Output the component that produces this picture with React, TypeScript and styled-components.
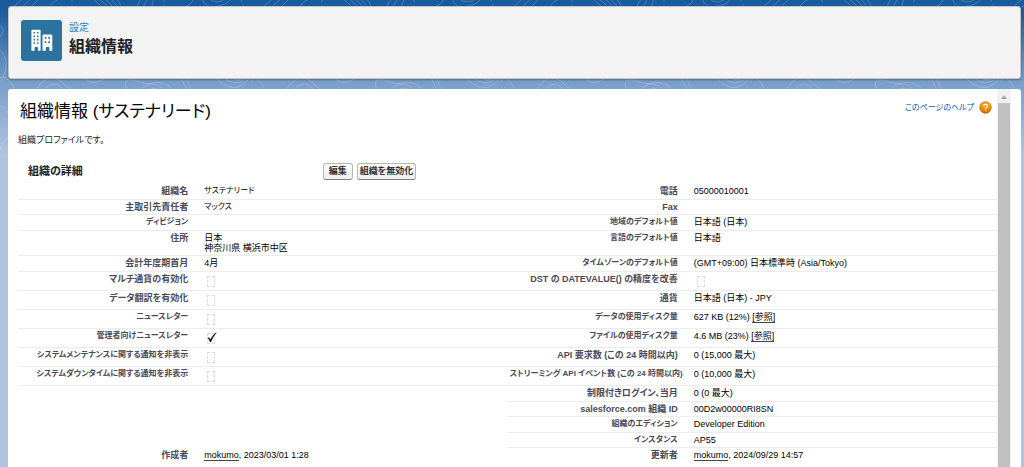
import React from "react";
import styled, { createGlobalStyle } from "styled-components";

const GlobalStyle = createGlobalStyle`
  *, *::before, *::after { box-sizing: border-box; }
  body {
    margin: 0;
    background: #b0c4df;
    color: #000;
    font-family: "Liberation Sans", "Noto Sans CJK JP", sans-serif;
    font-feature-settings: "palt";
    font-size: 9px;
    line-height: 10px;
  }
  h1, h2, h3, p { margin: 0; }
`;

const Page = styled.div`
  position: relative;
  min-height: 100vh;
  display: flex;
  flex-direction: column;
  gap: 10px;
  padding: 6px 3px 0 8px;
  overflow: hidden;
`;

const Backdrop = styled.div`
  position: absolute;
  inset: 0 0 auto 0;
  height: 160px;
  background: linear-gradient(#195c9d 0, #195c9d 10px, #7a9fca 84px, #b0c4df 156px);

  svg { display: block; width: 100%; height: 100%; }
`;

const PageHeader = styled.header`
  position: relative;
  display: flex;
  gap: 7px;
  min-height: 73px;
  padding: 13px 12px;
  border: 1px solid #c4c4c8;
  border-radius: 3px;
  background: #f3f3f3;
  box-shadow: 0 1px 2px rgba(0, 0, 0, 0.3);
`;

const IconTile = styled.span`
  display: block;
  width: 41px;
  height: 41px;
  border-radius: 3px;
  background: #2a739e;

  svg { display: block; width: 100%; height: 100%; }
`;

const HeaderText = styled.div`
  padding-top: 1px;
`;

const Eyebrow = styled.p`
  font-size: 10px;
  line-height: 14px;
  color: #1f7fc0;
`;

const HeaderTitle = styled.h1`
  font-size: 16px;
  line-height: 24px;
  font-weight: 700;
  color: #222;
`;

const Panel = styled.main`
  position: relative;
  flex: 1;
  display: flex;
  padding-right: 10px;
  border-radius: 3px 3px 0 0;
  background: #fff;
`;

const Content = styled.div`
  flex: 1;
  min-width: 0;
  padding: 10px 0 0 10px;
`;

const TitleBar = styled.div`
  display: flex;
  justify-content: space-between;
  align-items: flex-start;
  padding: 0 5px 0 2px;
`;

const Title = styled.h2`
  font-size: 17px;
  line-height: 26px;
  font-weight: 400;
`;

const HelpLink = styled.a`
  display: flex;
  align-items: center;
  gap: 5px;
  padding-top: 2px;
  font-size: 8px;
  color: #015ba7;
  text-decoration: none;

  svg { display: block; width: 13px; height: 13px; }
`;

const Intro = styled.p`
  padding: 9px 0 16px;
  line-height: 12px;
  color: #222;
`;

const SectionBar = styled.div`
  display: flex;
  align-items: center;
  gap: 4px;
  height: 18px;
  margin-bottom: 4px;
  padding-left: 10px;
`;

const SectionTitle = styled.h3`
  width: 30%;
  font-size: 11px;
  line-height: 16px;
  font-weight: 700;
  color: #222;
`;

const Actions = styled.div`
  display: flex;
  gap: 4px;
`;

const ActionButton = styled.button<{ $wide?: boolean }>`
  height: 17px;
  padding: 0 ${(p) => (p.$wide ? 2 : 5)}px;
  border: 1px solid #b5b5b5;
  border-bottom-color: #7f7f7f;
  border-radius: 3px;
  background: linear-gradient(#fff, #efefef);
  font: inherit;
  font-weight: 700;
  font-feature-settings: "palt";
  color: #333;
`;

const DetailTable = styled.table`
  width: 100%;
  table-layout: fixed;
  border-collapse: separate;
  border-spacing: 0;
`;

const Row = styled.tr<{ $height: number }>`
  height: ${(p) => p.$height}px;
`;

const line = "1px solid #ececec";

const Label = styled.th<{ $plain?: boolean; $small?: boolean }>`
  width: 18%;
  padding: 2px 6px 0 2px;
  border-bottom: ${(p) => (p.$plain ? "0" : line)};
  text-align: right;
  vertical-align: top;
  white-space: nowrap;
  font-size: ${(p) => (p.$small ? 8 : 9)}px;
  font-weight: 700;
  color: #4a4a56;
`;

const Value = styled.td<{ $plain?: boolean; $small?: boolean }>`
  width: 32%;
  padding: 2px 0 0 10px;
  border-bottom: ${(p) => (p.$plain ? "0" : line)};
  vertical-align: top;
  white-space: nowrap;
  font-size: ${(p) => (p.$small ? 8 : 9)}px;
`;

const TextLink = styled.a`
  color: #000;
  text-decoration: none;
  border-bottom: 1px solid #444;
`;

const CheckHolder = styled.span`
  position: relative;
  display: block;
  width: 14px;
  height: 14px;
  padding: 2px 3px 0;

  svg {
    position: absolute;
    inset: 0;
    width: 14px;
    height: 14px;
  }
`;

const CheckBox = styled.input`
  appearance: none;
  display: block;
  width: 8px;
  height: 11px;
  margin: 0;
  border: 1px dashed #dcdcdc;
`;

const ScrollTrack = styled.div`
  display: flex;
  flex-direction: column;
  width: 14px;
  padding: 0 1px;
  background: #f1f1f1;

  svg { display: block; width: 12px; height: 14px; }
`;

const ScrollThumb = styled.div`
  flex: 1;
  background: #c1c1c1;
`;

function Contours() {
  return (
    <svg aria-hidden="true">
      <defs>
        <pattern id="contours" width="250" height="160" patternUnits="userSpaceOnUse">
          <g fill="none" stroke="#fff" strokeOpacity="0.2" strokeWidth="1">
            <path d="M12 8 L28 -6 M20 9 L36 -6 M30 8 L44 -6 M50 6 q6 -8 16 -8" />
            <path d="M92 -2 q8 6 14 14 M98 -2 q8 6 14 14 M104 -2 q8 6 12 14 M110 -2 q6 6 10 14 M116 -2 q4 4 6 12 M142 -2 q-4 4 -6 12 M148 -2 q-4 6 -6 12 M154 -2 q-2 6 -3 12" />
            <path d="M180 8 q12 -2 14 -10 M202 -2 q3 12 16 8 q12 -2 14 -10 M208 -2 q10 8 18 0" />
            <path strokeDasharray="4 3" d="M72 -2 v12 M164 -2 v12 M240 -2 l5 12" />
            <path d="M-8 88 q10 -22 22 0 M36 90 q14 -22 30 -4 q6 4 8 6 M44 90 q10 -12 20 0 M84 76 q6 12 22 2" />
            <path d="M128 92 q-8 -14 6 -12 q14 6 22 2 q18 2 16 12 M138 92 q14 -16 28 0 M146 92 q8 -8 14 0" />
            <path d="M180 76 l8 16 M186 76 l6 16 M214 76 q20 22 36 2 M222 76 q14 14 26 0 M230 76 q8 8 14 0" />
            <path d="M-3 22 q12 8 0 18 M-3 48 q16 10 4 34 M-3 104 q12 4 12 14 M0 150 q4 -12 10 -14 M252 18 q-10 8 -6 22 M252 50 q-14 10 -8 22 M252 110 q-14 8 -8 26" />
          </g>
        </pattern>
      </defs>
      <rect width="100%" height="100%" fill="url(#contours)" />
    </svg>
  );
}

function BuildingsIcon() {
  return (
    <svg viewBox="0 0 41 41" aria-hidden="true">
      <path
        fill="#fff"
        fillRule="evenodd"
        d="M11.300 9.800h7.400a.9.9 0 0 1 .9.9V30.200a.6.6 0 0 1-.6.6h-2V27.600a.7.7 0 0 0-.7-.7h-2a.7.7 0 0 0-.7.7V30.800h-2.600a.6.6 0 0 1-.6-.6V10.700a.9.9 0 0 1 .9-.9zM12.500 12v1.600h1.600v-1.600zm3.400 0v1.600h1.600v-1.600zM12.500 15.400v1.600h1.600v-1.600zm3.400 0v1.600h1.600v-1.600zM12.500 18.800v1.600h1.600v-1.600zm3.400 0v1.600h1.600v-1.600zM12.500 22.200v1.600h1.600v-1.600zm3.400 0v1.600h1.600v-1.600z"
      />
      <path
        fill="#fff"
        fillRule="evenodd"
        d="M22.400 14.600h8a.9.9 0 0 1 .9.9V30.200a.6.6 0 0 1-.6.6h-2.300V27.600a.7.7 0 0 0-.7-.7h-2.200a.7.7 0 0 0-.7.7V30.800h-2.700a.6.6 0 0 1-.6-.6V15.500a.9.9 0 0 1 .9-.9zM23.700 17v1.700h1.700v-1.700zm3.600 0v1.700h1.700v-1.700zM23.700 21.200v1.700h1.700v-1.700zm3.600 0v1.700h1.700v-1.700z"
      />
    </svg>
  );
}

function HelpIcon() {
  return (
    <svg viewBox="0 0 13 13" aria-hidden="true">
      <defs>
        <linearGradient id="amber" x1="0" y1="0" x2="0" y2="1">
          <stop offset="0" stopColor="#f3a53a" />
          <stop offset="0.6" stopColor="#ee8f00" />
          <stop offset="1" stopColor="#b56a0c" />
        </linearGradient>
      </defs>
      <circle cx="6.5" cy="6.5" r="5.900" fill="url(#amber)" stroke="#b9761f" strokeWidth="0.600" />
      <path
        d="M4.700 5.200a1.900 1.700 0 1 1 2.900 1.300q-1 .5-1 1.400"
        fill="none"
        stroke="#fff"
        strokeWidth="1.300"
      />
      <rect x="5.900" y="8.900" width="1.400" height="1.300" fill="#fff" />
    </svg>
  );
}

function Check({ on, labelId }: { on?: boolean; labelId: string }) {
  return (
    <CheckHolder>
      <CheckBox type="checkbox" checked={!!on} disabled readOnly aria-labelledby={labelId} />
      {on && (
        <svg viewBox="0 0 14 14" aria-hidden="true">
          <path d="M3.800 7 5.100 6.300 6.200 8.500Q8.500 4 12.200 1.300L12.500 1.700Q9.300 5.400 7 11H6Q5.200 8.800 3.800 7Z" fill="#111" />
        </svg>
      )}
    </CheckHolder>
  );
}

type Field = { label: string; value?: React.ReactNode; check?: "on" | "off"; smallLabel?: boolean; smallValue?: boolean };
type Line = { height: number; left?: Field; right: Field };

const lines: Line[] = [
  {
    height: 16,
    left: { label: "組織名", value: "サステナリード", smallValue: true },
    right: { label: "電話", value: "05000010001" },
  },
  { height: 15, left: { label: "主取引先責任者", value: "マックス", smallValue: true }, right: { label: "Fax" } },
  {
    height: 16,
    left: { label: "ディビジョン", smallLabel: true },
    right: { label: "地域のデフォルト値", smallLabel: true, value: "日本語 (日本)" },
  },
  {
    height: 25,
    left: { label: "住所", value: <>日本<br />神奈川県 横浜市中区</> },
    right: { label: "言語のデフォルト値", smallLabel: true, value: "日本語" },
  },
  {
    height: 16,
    left: { label: "会計年度期首月", value: "4月" },
    right: { label: "タイムゾーンのデフォルト値", smallLabel: true, value: "(GMT+09:00) 日本標準時 (Asia/Tokyo)" },
  },
  { height: 19, left: { label: "マルチ通貨の有効化", check: "off" }, right: { label: "DST の DATEVALUE() の精度を改善", check: "off" } },
  { height: 19, left: { label: "データ翻訳を有効化", check: "off" }, right: { label: "通貨", value: "日本語 (日本) - JPY" } },
  {
    height: 19,
    left: { label: "ニュースレター", smallLabel: true, check: "off" },
    right: {
      label: "データの使用ディスク量",
      smallLabel: true,
      value: <>627 KB (12%) <TextLink href="#data">[参照]</TextLink></>,
    },
  },
  {
    height: 19,
    left: { label: "管理者向けニュースレター", smallLabel: true, check: "on" },
    right: {
      label: "ファイルの使用ディスク量",
      smallLabel: true,
      value: <>4.6 MB (23%) <TextLink href="#files">[参照]</TextLink></>,
    },
  },
  {
    height: 19,
    left: { label: "システムメンテナンスに関する通知を非表示", smallLabel: true, check: "off" },
    right: { label: "API 要求数 (この 24 時間以内)", value: "0 (15,000 最大)" },
  },
  {
    height: 19,
    left: { label: "システムダウンタイムに関する通知を非表示", smallLabel: true, check: "off" },
    right: { label: "ストリーミング API イベント数 (この 24 時間以内)", smallLabel: true, value: "0 (10,000 最大)" },
  },
  { height: 16, right: { label: "制限付きログイン、当月", value: "0 (0 最大)" } },
  { height: 15, right: { label: "salesforce.com 組織 ID", value: "00D2w00000RI8SN" } },
  { height: 16, right: { label: "組織のエディション", smallLabel: true, value: "Developer Edition" } },
  { height: 15, right: { label: "インスタンス", smallLabel: true, value: "AP55" } },
  {
    height: 16,
    left: { label: "作成者", value: <><TextLink href="#creator">mokumo</TextLink>, 2023/03/01 1:28</> },
    right: { label: "更新者", value: <><TextLink href="#editor">mokumo</TextLink>, 2024/09/29 14:57</> },
  },
];

function FieldCells({ field, id, plain }: { field: Field; id: string; plain: boolean }) {
  return (
    <>
      <Label scope="row" id={id} $plain={plain} $small={field.smallLabel}>{field.label}</Label>
      <Value $plain={plain} $small={field.smallValue}>
        {field.check ? <Check on={field.check === "on"} labelId={id} /> : field.value}
      </Value>
    </>
  );
}

export default function App() {
  return (
    <>
      <GlobalStyle />
      <Page>
        <Backdrop><Contours /></Backdrop>
        <PageHeader>
          <IconTile><BuildingsIcon /></IconTile>
          <HeaderText>
            <Eyebrow>設定</Eyebrow>
            <HeaderTitle>組織情報</HeaderTitle>
          </HeaderText>
        </PageHeader>
        <Panel>
          <Content>
            <TitleBar>
              <Title>組織情報 (サステナリード)</Title>
              <HelpLink href="#help">このページのヘルプ<HelpIcon /></HelpLink>
            </TitleBar>
            <Intro>組織プロファイルです。</Intro>
            <SectionBar>
              <SectionTitle>組織の詳細</SectionTitle>
              <Actions>
                <ActionButton type="button">編集</ActionButton>
                <ActionButton type="button" $wide>組織を無効化</ActionButton>
              </Actions>
            </SectionBar>
            <DetailTable>
              <tbody>
                {lines.map((row, i) => {
                  const last = i === lines.length - 1;
                  return (
                    <Row key={row.right.label} $height={row.height}>
                      {row.left ? (
                        <FieldCells field={row.left} id={`left-${i}`} plain={last} />
                      ) : (
                        <Value colSpan={2} $plain />
                      )}
                      <FieldCells field={row.right} id={`right-${i}`} plain={last} />
                    </Row>
                  );
                })}
              </tbody>
            </DetailTable>
          </Content>
          <ScrollTrack aria-hidden="true">
            <svg viewBox="0 0 12 14"><path d="M3 10 6 6.500 9 10Z" fill="#a0a0a0" /></svg>
            <ScrollThumb />
          </ScrollTrack>
        </Panel>
      </Page>
    </>
  );
}
